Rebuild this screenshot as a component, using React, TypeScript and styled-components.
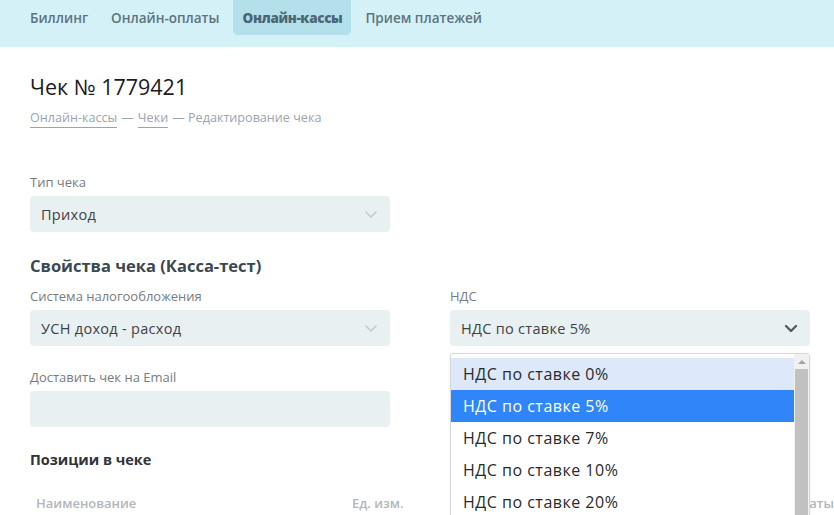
import styled, { createGlobalStyle } from 'styled-components';

const GlobalStyle = createGlobalStyle`
  html, body {
    margin: 0;
    padding: 0;
    background: #ffffff;
    overflow: hidden;
  }

  body {
    font-family: 'Open Sans', 'Noto Sans', sans-serif;
  }

  p, h1, h2, h3 {
    margin: 0;
  }
`;

const tabs = ['Биллинг', 'Онлайн-оплаты', 'Онлайн-кассы', 'Прием платежей'];
const vatOptions = ['НДС по ставке 0%', 'НДС по ставке 5%', 'НДС по ставке 7%', 'НДС по ставке 10%', 'НДС по ставке 20%'];

const Chevron = ({ dark }: { dark?: boolean }) => (
  <svg width="14" height="9" viewBox="0 0 14 9" fill="none">
    <path
      d="M2 2 L7 7 L12 2"
      stroke={dark ? '#555d63' : '#c3ccd1'}
      strokeWidth={dark ? 2.4 : 1.6}
      strokeLinecap="round"
      strokeLinejoin="round"
    />
  </svg>
);

const App = () => {
  return (
    <Page>
      <GlobalStyle />
      <TopNav>
        {tabs.map((tab) => (
          <Tab key={tab} $active={tab === 'Онлайн-кассы'}>
            {tab}
          </Tab>
        ))}
      </TopNav>

      <Content>
        <Title>Чек № 1779421</Title>
        <Breadcrumbs>
          <Crumb>Онлайн-кассы</Crumb>
          <span>—</span>
          <Crumb>Чеки</Crumb>
          <span>— Редактирование чека</span>
        </Breadcrumbs>

        <FormRow $top={45}>
          <Field>
            <Label>Тип чека</Label>
            <Select>
              <span>Приход</span>
              <Chevron />
            </Select>
          </Field>
        </FormRow>

        <SectionTitle>Свойства чека (Касса-тест)</SectionTitle>

        <FormRow $top={10}>
          <Field>
            <Label>Система налогообложения</Label>
            <Select>
              <span>УСН доход - расход</span>
              <Chevron />
            </Select>
          </Field>
          <Field>
            <Label>НДС</Label>
            <Select>
              <span>НДС по ставке 5%</span>
              <Chevron dark />
            </Select>
            <Dropdown>
              <OptionList>
                {vatOptions.map((option) => (
                  <Option
                    key={option}
                    $hover={option === 'НДС по ставке 0%'}
                    $selected={option === 'НДС по ставке 5%'}
                  >
                    {option}
                  </Option>
                ))}
              </OptionList>
              <Scrollbar>
                <ScrollArrow />
                <ScrollThumb />
              </Scrollbar>
            </Dropdown>
          </Field>
        </FormRow>

        <FormRow $top={22}>
          <Field>
            <Label>Доставить чек на Email</Label>
            <Input />
          </Field>
        </FormRow>

        <SubTitle>Позиции в чеке</SubTitle>

        <TableHead>
          <HeadCell $width={316}>Наименование</HeadCell>
          <HeadCell $width={100}>Ед. изм.</HeadCell>
          <HeadCell $grow>Способ оплаты</HeadCell>
        </TableHead>
      </Content>
    </Page>
  );
};

const Page = styled.div`
  width: 834px;
  height: 515px;
  overflow: hidden;
  background: #ffffff;
`;

const TopNav = styled.nav`
  display: flex;
  gap: 5px;
  height: 47px;
  padding-left: 21px;
  box-sizing: border-box;
  background: #d4f1f7;
`;

const Tab = styled.div<{ $active?: boolean }>`
  display: flex;
  align-items: center;
  height: 35px;
  padding: 0 9px;
  border-radius: 0 0 5px 5px;

  background: ${({ $active }) => ($active ? '#b3e0ea' : 'transparent')};

  font-size: 13.5px;
  font-weight: ${({ $active }) => ($active ? 800 : 600)};
  letter-spacing: ${({ $active }) => ($active ? '-0.35px' : '0')};
  color: ${({ $active }) => ($active ? '#4b6775' : '#5d737e')};
`;

const Content = styled.main`
  padding: 25px 0 0 30px;
`;

const Title = styled.h1`
  font-size: 21.5px;
  font-weight: 400;
  line-height: 30px;
  color: #1b1a1f;
`;

const Breadcrumbs = styled.div`
  display: flex;
  gap: 4px;
  margin-top: 7px;

  font-size: 12.6px;
  line-height: 18px;
  color: #9aa5b1;
`;

const Crumb = styled.span`
  border-bottom: 1px solid #9aa5b1;
`;

const FormRow = styled.div<{ $top: number }>`
  display: grid;
  grid-template-columns: 360px 360px;
  column-gap: 60px;
  margin-top: ${({ $top }) => $top}px;
`;

const Field = styled.div`
  position: relative;
  display: flex;
  flex-direction: column;
`;

const Label = styled.label`
  margin-bottom: 5px;

  font-size: 13px;
  line-height: 18px;
  color: #777c80;
`;

const Select = styled.div`
  display: flex;
  align-items: center;
  justify-content: space-between;
  height: 36px;
  padding: 0 12px 0 11px;
  box-sizing: border-box;

  background: #e9f0f2;
  border-radius: 4px;

  font-size: 14.5px;
  letter-spacing: 0.3px;
  color: #3f4245;
`;

const Input = styled.div`
  height: 36px;
  background: #e9f0f2;
  border-radius: 4px;
`;

const SectionTitle = styled.h2`
  margin-top: 23px;

  font-size: 16.5px;
  font-weight: 700;
  line-height: 22px;
  color: #3b4750;
`;

const SubTitle = styled.h3`
  margin-top: 22px;

  font-size: 14.5px;
  font-weight: 700;
  line-height: 22px;
  color: #2f3438;
`;

const TableHead = styled.div`
  display: flex;
  margin-top: 23px;
  padding-left: 6px;
`;

const HeadCell = styled.div<{ $width?: number; $grow?: boolean }>`
  width: ${({ $width }) => ($width ? `${$width}px` : 'auto')};
  flex: ${({ $grow }) => ($grow ? 1 : 'none')};
  text-align: ${({ $grow }) => ($grow ? 'right' : 'left')};

  font-size: 13px;
  font-weight: 600;
  line-height: 18px;
  color: #b3b6b9;
`;

const Dropdown = styled.div`
  position: absolute;
  top: 66px;
  left: 0;
  display: flex;
  width: 360px;
  height: 180px;
  padding: 4px 0 0;
  box-sizing: border-box;

  background: #ffffff;
  border: 1px solid #d8d8d8;
  border-radius: 3px;
  box-shadow: 0 1px 3px rgba(0, 0, 0, 0.08);
`;

const OptionList = styled.div`
  flex: 1;
  display: flex;
  flex-direction: column;
`;

const Option = styled.div<{ $hover?: boolean; $selected?: boolean }>`
  display: flex;
  align-items: center;
  height: 32px;
  padding-left: 12px;

  background: ${({ $hover, $selected }) => ($selected ? '#3085f8' : $hover ? '#dde9fb' : '#ffffff')};

  font-size: 16px;
  letter-spacing: 0.5px;
  color: ${({ $selected }) => ($selected ? '#ffffff' : '#2a2a2a')};
`;

const Scrollbar = styled.div`
  display: flex;
  flex-direction: column;
  align-items: center;
  width: 15px;
  margin-top: -4px;
  background: #f1f1f1;
`;

const ScrollArrow = styled.div`
  width: 0;
  height: 0;
  margin: 6px 0 5px;
  border-left: 4px solid transparent;
  border-right: 4px solid transparent;
  border-bottom: 4px solid #a3a3a3;
`;

const ScrollThumb = styled.div`
  flex: 1;
  width: 13px;
  background: #c1c1c1;
`;

export default App;
